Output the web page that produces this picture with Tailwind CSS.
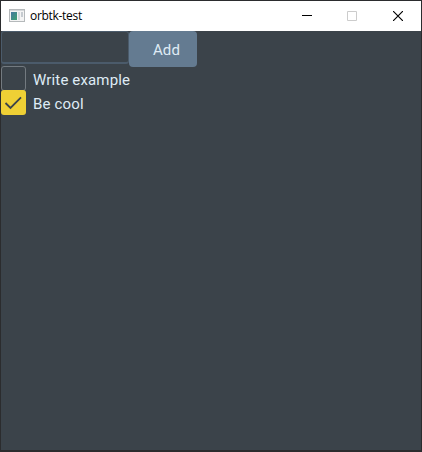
<!DOCTYPE html>
<html lang="en">
<head>
<meta charset="utf-8">
<title>orbtk-test</title>
<script src="https://cdn.jsdelivr.net/npm/@tailwindcss/browser@4"></script>
</head>
<body class="w-[422px] h-[452px] overflow-hidden bg-[#2b2c2e] pt-px px-px pb-0.5 font-[Roboto,sans-serif]">
<div class="flex flex-col w-[420px] h-[449px] bg-[#3b434a]">
  <header class="flex items-center h-[30px] shrink-0 bg-white text-black">
    <svg class="ml-2 w-4 h-[14px]" viewBox="0 0 16 14">
      <defs><linearGradient id="g" x2="1" y2="1"><stop stop-color="#4678a0"/><stop offset="1" stop-color="#3ea271"/></linearGradient></defs>
      <rect x=".5" y=".5" width="15" height="12" fill="#f4f4f4" stroke="#b5b9bb"/>
      <rect x="1" y="1" width="14" height="1" fill="#d4d7d9"/>
      <rect x="2" y="3" width="6" height="8" fill="url(#g)"/>
      <rect x="9" y="3" width="2" height="8" fill="#d8dcdf"/>
      <rect x="12" y="3" width="2" height="5" fill="#c6cbd0"/>
    </svg>
    <span class="ml-[5px] text-[12px] leading-4 font-['Open_Sans',sans-serif] tracking-[-0.3px]">orbtk-test</span>
    <div class="ml-auto flex h-full">
      <button class="w-[45px] flex items-center justify-center" aria-label="Minimize"><svg class="w-[10px] h-[10px]" viewBox="0 0 10 10" shape-rendering="crispEdges"><path d="M0 4h10v1H0z"/></svg></button>
      <button class="w-[45px] flex items-center justify-center" aria-label="Maximize"><svg class="w-[10px] h-[10px]" viewBox="0 0 10 10" fill="none" stroke="#ccc"><path d="M.5.5h9v9h-9z"/></svg></button>
      <button class="w-[47px] flex items-center justify-center" aria-label="Close"><svg class="w-[10px] h-[10px]" viewBox="0 0 10 10" fill="none" stroke="#000" stroke-width="1.15"><path d="M0 0l10 10M10 0L0 10"/></svg></button>
    </div>
  </header>
  <main class="flex flex-col items-start text-[15px] tracking-[0.15px] text-[#dfebf5]">
    <div class="flex h-[35px] items-start">
      <div class="w-32 h-[33px] border border-b-2 border-[#4b5b6b] rounded-[3px]"></div>
      <button class="w-[68px] h-9 shrink-0 rounded-[4px] bg-[#647b91] pl-[7px] pt-px leading-[36px]">Add</button>
    </div>
    <label class="flex h-6 items-start gap-[7px]">
      <span class="w-[25px] h-[25px] border-[1.5px] border-[#737a80] rounded-[3px]"></span>
      <span class="pt-0.5 leading-6">Write example</span>
    </label>
    <label class="flex h-6 items-start gap-[7px]">
      <span class="flex w-[25px] h-[25px] items-center justify-center rounded-[3px] bg-[#efd035]">
        <svg class="w-[25px] h-[25px]" viewBox="0 0 25 25" fill="none" stroke="#3b434a" stroke-width="1.8"><path d="M4.5 13l5 5L20 7.3"/></svg>
      </span>
      <span class="pt-0.5 leading-6">Be cool</span>
    </label>
  </main>
</div>
</body>
</html>
